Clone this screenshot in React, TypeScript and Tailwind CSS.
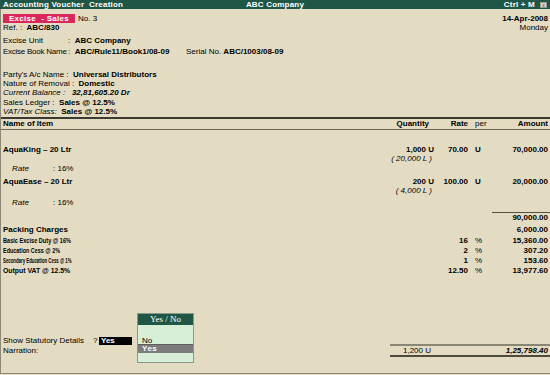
// Tally-style Accounting Voucher Creation screen
import React from 'react';

interface ItemRow {
    name: string;
    qty: string;
    alt: string;
    rate: string;
    per: string;
    amount: string;
    taxRate: string;
}

const items: ItemRow[] = [
    { name: 'AquaKing – 20 Ltr', qty: '1,000 U', alt: '( 20,000 L )', rate: '70.00', per: 'U', amount: '70,000.00', taxRate: ': 16%' },
    { name: 'AquaEase – 20 Ltr', qty: '200 U', alt: '( 4,000 L )', rate: '100.00', per: 'U', amount: '20,000.00', taxRate: ': 16%' },
];

// squeezed labels, like the narrow font Tally uses for duty ledgers
const duties = [
    { name: 'Basic Excise Duty @ 16%', rate: '16', amount: '15,360.00', squeeze: 'scale-x-[0.7]' },
    { name: 'Education Cess @ 2%', rate: '2', amount: '307.20', squeeze: 'scale-x-[0.68]' },
    { name: 'Secondary Education Cess @ 1%', rate: '1', amount: '153.60', squeeze: 'scale-x-[0.54]' },
    { name: 'Output VAT @ 12.5%', rate: '12.50', amount: '13,977.60', squeeze: 'scale-x-[0.86]' },
];

function Cols({ name, qty, rate, per, amount, className = '' }: { name?: React.ReactNode; qty?: React.ReactNode; rate?: React.ReactNode; per?: React.ReactNode; amount?: React.ReactNode; className?: string }) {
    return (
        <div className={`flex h-[9px] leading-[9px] ${className}`}>
            <div className="flex-1 pl-[2px] whitespace-nowrap">{name}</div>
            <div className="w-[43px] text-right whitespace-nowrap">{qty}</div>
            <div className="w-[34px] text-right whitespace-nowrap">{rate}</div>
            <div className="w-[18px] pl-[7px] whitespace-nowrap">{per}</div>
            <div className="w-[64px] text-right pr-[2px] whitespace-nowrap">{amount}</div>
        </div>
    );
}

export default function App() {
    return (
        <div className="relative w-[550px] h-[375px] overflow-hidden bg-[#e3dcc2] text-[8px] text-black font-['Liberation_Sans',Arial,sans-serif] flex flex-col">
            {/* Title bar */}
            <div className="h-[9px] bg-[#1f5646] text-white font-bold leading-[9px] grid grid-cols-3 px-[3px] tracking-[0.2px]">
                <div className="whitespace-nowrap">Accounting Voucher &nbsp;Creation</div>
                <div className="text-center whitespace-nowrap">ABC Company</div>
                <div className="flex justify-end items-center gap-[5px]">
                    <span>Ctrl + M</span>
                    <span className="w-[7px] h-[6px] bg-[#d8d8d0] border border-[#9a9a90] text-[#333] text-[5px] leading-[4px] text-center font-normal">x</span>
                </div>
            </div>

            <div className="flex-1 flex flex-col border-l border-b border-[#8d8876] mb-[1px]">
                {/* Voucher header */}
                <div className="flex">
                    <div className="flex-1 flex flex-col pl-[2px]">
                        <div className="mt-[5px] h-[9px] flex items-center">
                            <div className="w-[72px] h-[9px] bg-[#d9265b] text-white font-bold text-center leading-[9px] tracking-[0.3px]">Excise&nbsp; - Sales</div>
                            <div className="ml-[3px] leading-[9px]">No. 3</div>
                        </div>
                        <div className="h-[9px] leading-[9px]">Ref. : &nbsp;<b>ABC/830</b></div>
                        <div className="mt-[4px] h-[9px] leading-[9px] flex">
                            <span className="w-[65px]">Excise Unit</span>
                            <span>: &nbsp;<b>ABC Company</b></span>
                        </div>
                        <div className="mt-[2px] h-[9px] leading-[9px] flex">
                            <span className="w-[65px] whitespace-nowrap tracking-[-0.25px]">Excise Book Name</span>
                            <span className="w-[118px] whitespace-nowrap">: &nbsp;<b>ABC/Rule11/Book1/08-09</b></span>
                            <span className="whitespace-nowrap">Serial No. <b>ABC/1003/08-09</b></span>
                        </div>
                    </div>
                    <div className="flex flex-col items-end pr-[2px] mt-[5px]">
                        <div className="h-[9px] leading-[9px] font-bold">14-Apr-2008</div>
                        <div className="h-[10px] leading-[10px]">Monday</div>
                    </div>
                </div>

                {/* Party details */}
                <div className="mt-[14px] pl-[2px] flex flex-col">
                    <div className="h-[9px] leading-[9px]">Party's A/c Name : &nbsp;<b>Universal Distributors</b></div>
                    <div className="h-[9px] leading-[9px]">Nature of Removal : &nbsp;<b>Domestic</b></div>
                    <div className="h-[9px] leading-[9px] italic">Current Balance : &nbsp;&nbsp;<b>32,81,605.20 Dr</b></div>
                    <div className="mt-[1px] h-[9px] leading-[9px]">Sales Ledger : &nbsp;<b>Sales @ 12.5%</b></div>
                    <div className="h-[9px] leading-[9px]"><i>VAT/Tax Class:</i> &nbsp;<b>Sales @ 12.5%</b></div>
                </div>

                {/* Column header */}
                <div className="mt-[1px] border-t-2 border-[#3b3a30]" />
                <div className="border-b border-[#6e6a5a] font-bold">
                    <Cols
                        className="h-[10px] leading-[10px]"
                        name="Name of Item"
                        qty={<span className="pr-[5px]">Quantity</span>}
                        rate="Rate"
                        per={<span className="font-normal">per</span>}
                        amount="Amount"
                    />
                </div>

                {/* Items */}
                <div className="mt-[15px] flex flex-col">
                    {items.map((it, i) => (
                        <div key={it.name} className={i > 0 ? 'mt-[4px]' : ''}>
                            <Cols className="font-bold" name={it.name} qty={it.qty} rate={it.rate} per={it.per} amount={it.amount} />
                            <Cols className="italic" qty={<span className="pr-[2px]">{it.alt}</span>} />
                            <div className={`${i > 0 ? 'mt-[3px]' : 'mt-[1px]'} h-[9px] leading-[9px] flex pl-[11px]`}>
                                <span className="italic w-[41px]">Rate</span>
                                <span>{it.taxRate}</span>
                            </div>
                        </div>
                    ))}
                </div>

                {/* Subtotal */}
                <div className="mt-[5px] flex justify-end">
                    <div className="w-[58px] border-t border-[#55513f]" />
                </div>
                <Cols className="font-bold" amount="90,000.00" />
                <Cols className="mt-[3px] font-bold" name="Packing Charges" amount="6,000.00" />
                <div className="mt-[2px] flex flex-col">
                    {duties.map(d => (
                        <Cols
                            key={d.name}
                            className="h-[10px] leading-[10px] font-bold"
                            name={<span className={`inline-block origin-left ${d.squeeze}`}>{d.name}</span>}
                            rate={d.rate}
                            per={<span className="font-normal">%</span>}
                            amount={d.amount}
                        />
                    ))}
                </div>

                {/* Footer */}
                <div className="mt-[60px] flex">
                    <div className="flex-1 flex flex-col pl-[2px]">
                        <div className="h-[10px] flex items-center">
                            <span className="w-[90px]">Show Statutory Details</span>
                            <span className="w-[6px]">?</span>
                            <span className="w-[33px] h-[8px] bg-black text-white font-bold leading-[8px] pl-[2px]">Yes</span>
                        </div>
                        <div className="h-[10px] leading-[10px]">Narration:</div>
                    </div>
                    <div className="w-[160px] mt-[8px]">
                        <div className="border-t-2 border-[#8a8674]" />
                        <div className="h-[9px] leading-[9px] flex justify-between pl-[13px] pr-[2px]">
                            <span>1,200 U</span>
                            <span className="font-bold italic">1,25,798.40</span>
                        </div>
                        <div className="border-t-2 border-[#4e4b3e]" />
                    </div>
                </div>
            </div>

            {/* Yes / No popup */}
            <div className="absolute left-[137px] top-[313px] w-[57px] h-[50px] border border-[#8a9a8a] bg-[#d6efd6] flex flex-col">
                <div className="h-[11px] bg-[#1f5646] text-white text-center leading-[11px] text-[9px] font-['Liberation_Serif',serif]">Yes / No</div>
                <div className="mt-[11px] h-[9px] leading-[9px] pl-[4px] border-b border-[#5e5e5e]">No</div>
                <div className="h-[8px] leading-[8px] pl-[4px] bg-[#7c7c7c] text-white font-bold tracking-[0.5px]">Yes</div>
            </div>
        </div>
    );
}
